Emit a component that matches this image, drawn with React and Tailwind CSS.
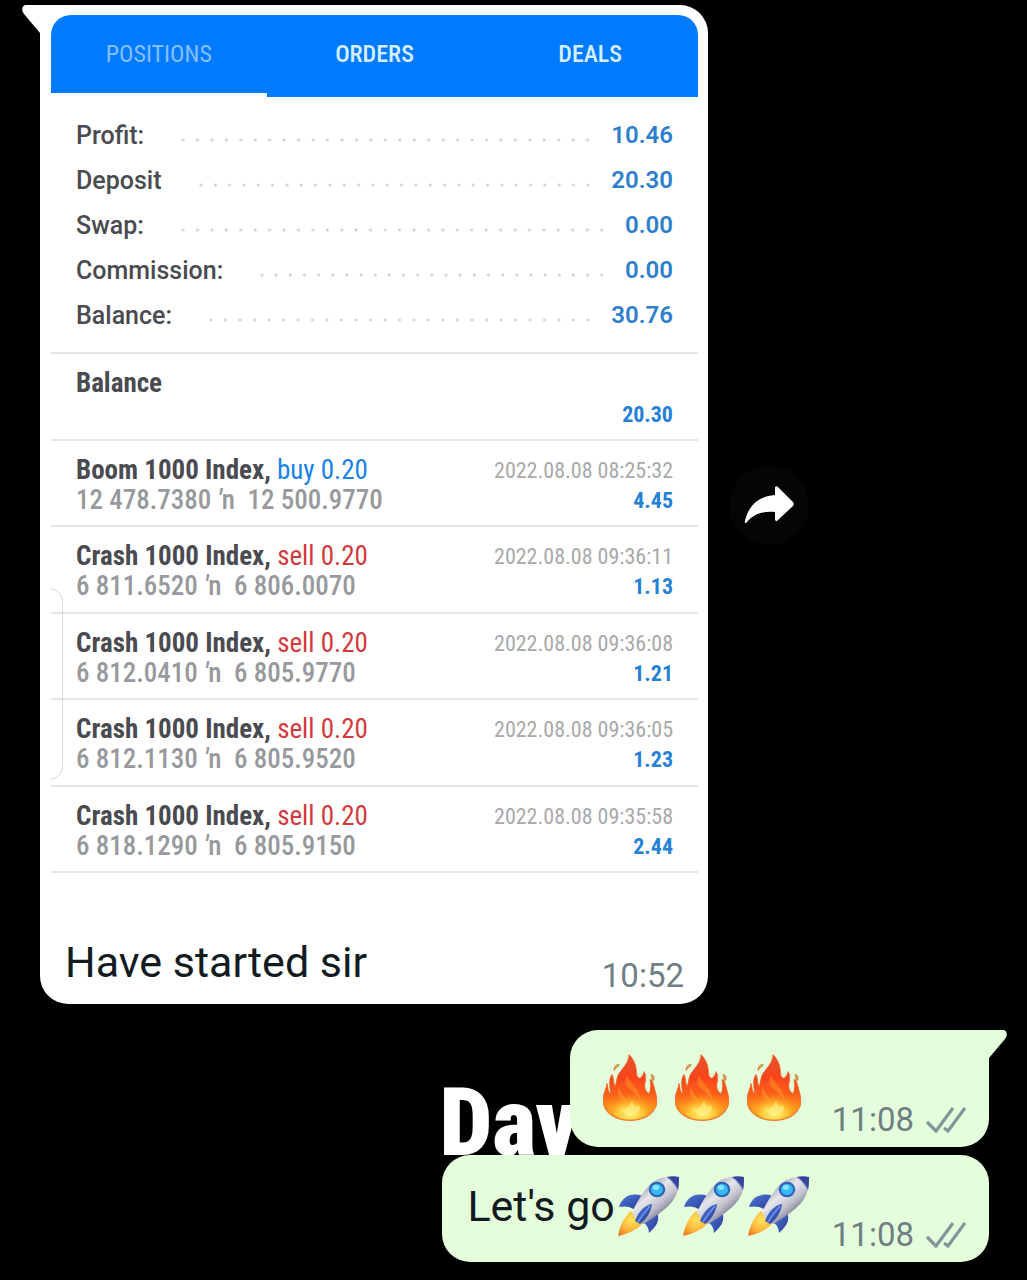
import React, { useId } from "react";

const summary = [
  ["Profit:", "10.46"],
  ["Deposit", "20.30"],
  ["Swap:", "0.00"],
  ["Commission:", "0.00"],
  ["Balance:", "30.76"],
];

const deals = [
  { name: "Boom 1000 Index,", side: "buy 0.20", from: "12 478.7380", to: "12 500.9770", time: "2022.08.08 08:25:32", profit: "4.45" },
  { name: "Crash 1000 Index,", side: "sell 0.20", from: "6 811.6520", to: "6 806.0070", time: "2022.08.08 09:36:11", profit: "1.13" },
  { name: "Crash 1000 Index,", side: "sell 0.20", from: "6 812.0410", to: "6 805.9770", time: "2022.08.08 09:36:08", profit: "1.21" },
  { name: "Crash 1000 Index,", side: "sell 0.20", from: "6 812.1130", to: "6 805.9520", time: "2022.08.08 09:36:05", profit: "1.23" },
  { name: "Crash 1000 Index,", side: "sell 0.20", from: "6 818.1290", to: "6 805.9150", time: "2022.08.08 09:35:58", profit: "2.44" },
];

function Fire() {
  const id = useId();
  return (
    <svg viewBox="0 0 54 66" className="h-[67px] w-[54px]" role="img" aria-label="fire">
      <defs>
        <linearGradient id={id + "a"} x1="0" y1="0" x2="0" y2="1">
          <stop offset="0" stopColor="#e2552f" />
          <stop offset="0.35" stopColor="#f9441c" />
          <stop offset="0.6" stopColor="#fc5f19" />
          <stop offset="0.8" stopColor="#fd8f1d" />
          <stop offset="1" stopColor="#ee9a2a" />
        </linearGradient>
        <radialGradient id={id + "b"} cx="0.5" cy="0.85" r="0.62">
          <stop offset="0" stopColor="#fff27a" />
          <stop offset="0.4" stopColor="#ffcf3c" stopOpacity="0.9" />
          <stop offset="0.75" stopColor="#ff9a1c" stopOpacity="0.4" />
          <stop offset="1" stopColor="#ff7a1c" stopOpacity="0" />
        </radialGradient>
      </defs>
      <path
        d="M26 0C26 8 20 13 16 19C13 24 14 28 12 32C10 28 11 23 9 20C6 24 6 30 8 39C5 38 5 33 4 29C3 35 0 39 0 47C1 59 13 66 27 66C42 66 53 59 54 47C54 41 52 37 51 32C50 28 49 26 47 25C48 31 48 36 46 39C43 37 41 34 42 29C43 25 43 20 41 17C40 22 37 25 35 23C32 20 36 10 26 0Z"
        fill={"url(#" + id + "a)"}
        stroke="#e8642a"
        strokeWidth="0.8"
      />
      <ellipse cx="27" cy="47" rx="25" ry="18" fill={"url(#" + id + "b)"} />
      <path d="M24 20C25 28 37 32 37 45C33 38 25 35 22 29ZM16 32C17 39 23 43 25 50C18 45 13 40 16 32Z" fill="#ffa22b" opacity="0.45" />
      <path d="M29 45C30 52 33 54 36 50C38 56 35 61 28 61C22 61 18 57 17 53C21 56 28 53 29 45Z" fill="#fff08a" opacity="0.6" />
      <path d="M11 16C11 12 13 10 16 10C15 13 13 13 11 16Z M48 20C52 21 52 25 49 27C49 24 49 23 48 20Z" fill="#e9a13c" stroke="#bd7930" strokeWidth="0.8" />
    </svg>
  );
}

function Rocket() {
  const id = useId();
  return (
    <svg viewBox="0 0 62 60" className="h-[60px] w-[62px]" role="img" aria-label="rocket">
      <defs>
        <linearGradient id={id + "a"} x1="0.25" y1="0.2" x2="0.7" y2="0.75">
          <stop offset="0" stopColor="#a6a6ba" />
          <stop offset="0.35" stopColor="#e6e6ec" />
          <stop offset="0.7" stopColor="#c2c2ce" />
          <stop offset="1" stopColor="#80809a" />
        </linearGradient>
        <linearGradient id={id + "b"} x1="0" y1="0" x2="1" y2="1">
          <stop offset="0" stopColor="#4c7cdd" />
          <stop offset="1" stopColor="#2b3690" />
        </linearGradient>
        <radialGradient id={id + "c"} cx="0.55" cy="0.35" r="0.75">
          <stop offset="0" stopColor="#ffe45c" />
          <stop offset="0.6" stopColor="#fdb43a" />
          <stop offset="1" stopColor="#ea7a24" />
        </radialGradient>
      </defs>
      <path d="M25 20C19 18 13 18 8 21C4 24 2 27 1 31C6 30 12 30 17 34Z" fill={"url(#" + id + "b)"} />
      <path d="M39 36C42 43 40 49 31 57C31 53 29 49 26 47Z" fill={"url(#" + id + "b)"} />
      <path d="M13 35C6 41 2 49 0 60C9 58 18 55 25 47Z" fill={"url(#" + id + "c)"} />
      <path d="M14 36C20 24 28 10 38 4C45 0 55 0 61 1C62 13 58 24 47 33C40 39 32 44 25 48C20 46 16 41 14 36Z" fill={"url(#" + id + "a)"} />
      <path d="M49 1C53 0 57 0 61 1C61 5 61 10 60 14C57 9 53 4 49 1Z" fill="#37449c" />
      <path d="M49 1C54 4 58 9 60 14" fill="none" stroke="#7688c8" strokeWidth="1" />
      <ellipse cx="39" cy="13.5" rx="8.3" ry="7.7" fill="#2e62b4" />
      <ellipse cx="39" cy="13.5" rx="6" ry="5.8" fill="#35b9ef" />
      <ellipse cx="38" cy="11.5" rx="3.2" ry="2.4" fill="#8be2ff" />
      <path d="M34 28C27 29 20 36 17 45L22 48C28 44 33 36 34 28Z" fill={"url(#" + id + "b)"} />
      <path d="M32 30C27 36 23 41 20 46" fill="none" stroke="#6c9cf0" strokeWidth="1.5" />
    </svg>
  );
}

function Stamp({ children, read }) {
  return (
    <span className="flex items-center gap-3 text-[33px] leading-10 text-[#6f7f84]">
      <time>{children}</time>
      {read && (
        <svg viewBox="0 0 40 27" className="h-[27px] w-10" fill="none" stroke="#84949a" strokeWidth="3.2" role="img" aria-label="delivered">
          <path d="M1 15L10 24L27 1M18 21L22 24L39 1" />
        </svg>
      )}
    </span>
  );
}

function Report() {
  return (
    <div className="relative overflow-hidden rounded-t-[20px] text-[#4a4b50]">
      <div role="tablist" className="grid grid-cols-3 bg-[#007aff] font-['Roboto_Condensed',Roboto,sans-serif] text-2xl leading-[78px]">
        <button role="tab" aria-selected="true" className="border-b-4 border-white text-[#84c0ff]">POSITIONS</button>
        <button role="tab" aria-selected="false" className="border-b-4 border-transparent font-medium text-[#d5efff]">ORDERS</button>
        <button role="tab" aria-selected="false" className="border-b-4 border-transparent font-medium text-[#d5efff]">DEALS</button>
      </div>
      <dl className="border-b-2 border-[#e6e6e6] px-[25px] pt-4 pb-[14px] leading-[45px]">
        {summary.map(([label, value]) => (
          <div key={label} className="flex items-center">
            <dt className="text-[25px] font-medium">{label}</dt>
            <div className="mt-2 mr-4 ml-8 h-1 flex-1 bg-[radial-gradient(circle,#d4d4d4_1px,transparent_2px)] bg-[length:14px_4px] bg-repeat-space" />
            <dd className="text-2xl leading-[45px] font-semibold text-[#2f7fcc]">{value}</dd>
          </div>
        ))}
      </dl>
      <ul className="grid min-h-[519px] auto-rows-fr font-['Roboto_Condensed',Roboto,sans-serif] text-[27px] leading-[30px]">
        <li className="flex justify-between border-b-2 border-[#e6e6e6] px-[25px] pt-[14px]">
          <b>Balance</b>
          <b className="mt-8 text-[22px] leading-[30px] text-[#2580d8]">20.30</b>
        </li>
        {deals.map((d) => (
          <li key={d.time} className="flex justify-between border-b-2 border-[#e6e6e6] px-[25px] pt-[14px]">
            <div>
              <p>
                <b>{d.name}</b>{" "}
                <span className={d.side.startsWith("buy") ? "text-[#1b82e8]" : "text-[#d23a3e]"}>{d.side}</span>
              </p>
              <p className="font-medium whitespace-pre text-[#98999d]">
                {d.from} <i>′</i>
                {"n  " + d.to}
              </p>
            </div>
            <div className="pt-px text-right text-[22px] leading-[30px]">
              <p className="text-[#a9a9ab]">{d.time}</p>
              <b className="text-[#2580d8]">{d.profit}</b>
            </div>
          </li>
        ))}
      </ul>
      <div className="absolute top-[573px] -left-1 h-[192px] w-4 rounded-r-[14px] border border-[#d8d8d8]" />
    </div>
  );
}

export default function App() {
  return (
    <main className="min-h-screen overflow-hidden bg-black pt-[5px] pr-[38px] pb-[18px] pl-10 font-[Roboto,sans-serif]">
      <section className="flex items-center gap-[21px]">
        <article className="relative w-full max-w-[668px] rounded-[28px] rounded-tl-none bg-white pt-[10px] pr-[10px] pb-2 pl-[11px]">
          <svg viewBox="0 0 20 30" className="absolute top-0 -left-[18px] h-[30px] w-5" fill="#fff" aria-hidden="true">
            <path d="M20 0H4C0 0 -1 5 2 9L18 28H20Z" />
          </svg>
          <Report />
          <div className="flex items-end justify-between pt-[63px] pr-[14px] pl-[14px]">
            <p className="pb-2 text-[43px] leading-[52px] text-[#111b21]">Have started sir</p>
            <Stamp>10:52</Stamp>
          </div>
        </article>
        <button aria-label="Forward" className="flex size-20 shrink-0 items-center justify-center rounded-full bg-[#030507]">
          <svg viewBox="0 0 50 38" className="h-[38px] w-[50px]" fill="#fff" aria-hidden="true">
            <path d="M31 9V2C31 0 33 0 34 1L49 16C50 17 50 19 49 20L34 34C33 36 31 35 31 33V26C18 25 10 28 3 36C2 38 0 37 1 35C4 20 15 10 31 9Z" />
          </svg>
        </button>
      </section>

      <section className="mt-[26px] flex flex-col items-end gap-2">
        <article className="relative z-10 flex items-end gap-[31px] rounded-[28px] rounded-tr-none bg-[#e4fddb] pt-6 pr-[23px] pb-[7px] pl-[33px]">
          <svg viewBox="0 0 20 30" className="absolute top-0 -right-[18px] h-[30px] w-5" fill="#e4fddb" aria-hidden="true">
            <path d="M0 0H16C20 0 21 5 18 9L2 28H0Z" />
          </svg>
          <div className="flex gap-[18px] pb-[19px]">
            <Fire />
            <Fire />
            <Fire />
          </div>
          <Stamp read>11:08</Stamp>
        </article>
        <div className="relative">
          <span className="absolute -top-[66px] -left-[3px] font-['Roboto_Condensed',Roboto,sans-serif] text-[94px] leading-[68px] font-black text-white">Dav</span>
          <article className="relative flex items-end gap-[22px] rounded-[28px] bg-[#e4fddb] pt-5 pr-[23px] pb-[7px] pl-[25px]">
            <div className="flex items-center gap-[3px] pb-[18px]">
              <p className="text-[43px] leading-[62px] text-[#111b21]">Let's go</p>
              <Rocket />
              <Rocket />
              <Rocket />
            </div>
            <Stamp read>11:08</Stamp>
          </article>
        </div>
      </section>
    </main>
  );
}
